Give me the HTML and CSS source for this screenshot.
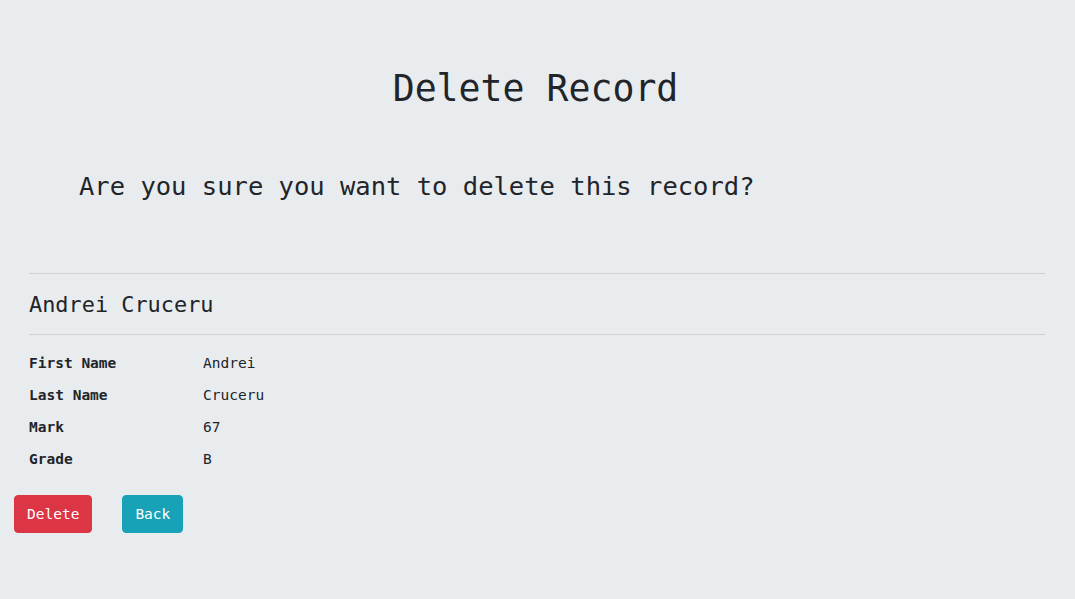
FILE: index.html
```html
<!DOCTYPE html>
<html lang="en">
<head>
<meta charset="utf-8">
<title>Delete Record</title>
<link rel="stylesheet" href="styles.css">
</head>
<body>
<main class="page">
  <h1 class="title">Delete Record</h1>
  <h3 class="question">Are you sure you want to delete this record?</h3>
  <section class="record">
    <hr class="rule">
    <h4 class="name">Andrei Cruceru</h4>
    <hr class="rule">
    <dl class="details">
      <dt>First Name</dt><dd>Andrei</dd>
      <dt>Last Name</dt><dd>Cruceru</dd>
      <dt>Mark</dt><dd>67</dd>
      <dt>Grade</dt><dd>B</dd>
    </dl>
  </section>
  <form class="actions">
    <button type="button" class="btn btn-danger">Delete</button>
    <a class="btn btn-info" href="#">Back</a>
  </form>
</main>
</body>
</html>
```

FILE: styles.css
```css
* { box-sizing: border-box; }
html, body { margin: 0; padding: 0; }
body {
  background: #e9ecef;
  color: #212529;
  font-family: "DejaVu Sans Mono", "Liberation Mono", monospace;
  height: 599px;
  overflow: hidden;
}
.page {
  padding: 66px 30px 0 14px;
}
.title {
  margin: 0;
  font-size: 36.5px;
  font-weight: 400;
  line-height: 46px;
  text-align: center;
  padding-left: 12px;
}
.question {
  margin: 59px 0 0 65px;
  font-size: 25.5px;
  font-weight: 400;
  line-height: 30px;
}
.record {
  margin: 72px 0 0 15px;
}
.rule {
  margin: 0;
  border: 0;
  border-top: 1px solid #cfd2d5;
}
.name {
  margin: 0;
  padding: 17px 0 16px;
  font-size: 21.9px;
  font-weight: 400;
  line-height: 27px;
}
.details {
  margin: 12px 0 0;
  display: grid;
  grid-template-columns: 174px 1fr;
  grid-auto-rows: 32px;
  font-size: 14.5px;
}
.details dt, .details dd {
  margin: 0;
  line-height: 32px;
}
.details dt { font-weight: 700; }
.actions {
  margin: 20px 0 0;
  display: flex;
  gap: 30px;
}
.btn {
  display: inline-block;
  height: 38px;
  padding: 0 12px;
  border: 1px solid transparent;
  border-radius: 4px;
  font-family: inherit;
  font-size: 14.5px;
  line-height: 36px;
  color: #fff;
  text-decoration: none;
  cursor: pointer;
}
.btn-danger { background: #dc3545; border-color: #dc3545; }
.btn-info { background: #17a2b8; border-color: #17a2b8; }
```
